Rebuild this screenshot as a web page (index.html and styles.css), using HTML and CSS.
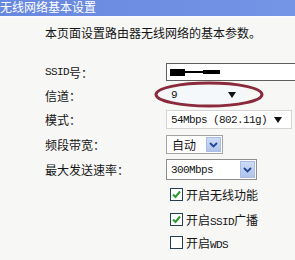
FILE: index.html
```html
<!DOCTYPE html>
<html lang="zh-CN">
<head>
<meta charset="utf-8">
<title>无线网络基本设置</title>
<link rel="stylesheet" href="styles.css">
</head>
<body>
<div class="header"><span>无线网络基本设置</span></div>
<p class="intro">本页面设置路由器无线网络的基本参数。</p>
<div class="form">
  <div class="label"><span class="en">SSID</span>号：</div>
  <div class="ctrl">
    <div class="text-input">
      <span class="r-block"></span><span class="r-line"></span><span class="r-bar"></span>
    </div>
  </div>

  <div class="label">信道：</div>
  <div class="ctrl">
    <div class="sel-ch"><span class="en">9</span><span class="tri"></span></div>
  </div>

  <div class="label">模式：</div>
  <div class="ctrl">
    <div class="sel-mode"><span class="en">54Mbps (802.11g)</span><span class="tri"></span></div>
  </div>

  <div class="label">频段带宽：</div>
  <div class="ctrl">
    <div class="sel-xp w-bw"><span>自动</span><span class="btn"><svg viewBox="0 0 9 6" width="9" height="6"><path d="M1 1 L4.5 4.5 L8 1" fill="none" stroke="#23469a" stroke-width="1.8"/></svg></span></div>
  </div>

  <div class="label">最大发送速率：</div>
  <div class="ctrl">
    <div class="sel-xp w-rate"><span class="en">300Mbps</span><span class="btn"><svg viewBox="0 0 9 6" width="9" height="6"><path d="M1 1 L4.5 4.5 L8 1" fill="none" stroke="#23469a" stroke-width="1.8"/></svg></span></div>
  </div>

  <div class="ctrl c2">
    <span class="cb"><svg viewBox="0 0 11 11" width="11" height="11"><path d="M2 5.5 L4.5 8 L9 2.5" fill="none" stroke="#2c9a2c" stroke-width="2"/></svg></span><span>开启无线功能</span>
  </div>
  <div class="ctrl c2">
    <span class="cb"><svg viewBox="0 0 11 11" width="11" height="11"><path d="M2 5.5 L4.5 8 L9 2.5" fill="none" stroke="#2c9a2c" stroke-width="2"/></svg></span><span>开启<span class="en">SSID</span>广播</span>
  </div>
  <div class="ctrl c2">
    <span class="cb"></span><span>开启<span class="en">WDS</span></span>
  </div>
</div>
<svg class="ellipse" width="112" height="29" viewBox="0 0 112 29"><ellipse cx="56" cy="14.5" rx="53" ry="11.5" fill="none" stroke="#8a2a3c" stroke-width="3"/></svg>
</body>
</html>
```

FILE: styles.css
```css
html, body {
  margin: 0;
  padding: 0;
}
body {
  width: 295px;
  height: 260px;
  overflow: hidden;
  position: relative;
  background: #f7f7f5;
  color: #151515;
  font-family: "Noto Sans CJK SC", sans-serif;
  font-size: 12px;
}
.en {
  font-family: "Liberation Mono", "DejaVu Sans Mono", monospace;
  font-size: 11px;
  letter-spacing: -0.6px;
}
.header {
  height: 16px;
  background: linear-gradient(to right, #6788df, #7494e6);
  color: #fff;
  overflow: hidden;
  border-bottom: 2px solid #fbfbfd;
}
.header span {
  display: block;
  font-size: 12px;
  line-height: 13px;
  margin-top: 0;
  white-space: nowrap;
}
.intro {
  margin: 7px 0 0 45px;
  line-height: 16px;
  white-space: nowrap;
}
.form {
  display: grid;
  grid-template-columns: 121px 1fr;
  grid-template-rows: 22px 24px 25px 25px 25px 25px 24px 23px;
  padding-left: 45px;
  margin-top: 20px;
}
.label {
  display: flex;
  align-items: center;
  white-space: nowrap;
}
.ctrl {
  display: flex;
  align-items: center;
  white-space: nowrap;
}
.c2 {
  grid-column: 2;
}
.text-input {
  width: 140px;
  height: 18px;
  box-sizing: border-box;
  border: 1px solid #5f5f5f;
  background: #fff;
  display: flex;
  align-items: center;
  padding-left: 3px;
}
.r-block {
  width: 15px;
  height: 7px;
  background: #000;
}
.r-line {
  width: 18px;
  height: 2px;
  background: #000;
}
.r-bar {
  width: 17px;
  height: 4px;
  background: #000;
}
.tri {
  width: 0;
  height: 0;
  border-left: 4px solid transparent;
  border-right: 4px solid transparent;
  border-top: 6px solid #111;
}
.sel-ch {
  width: 80px;
  height: 18px;
  box-sizing: border-box;
  margin-left: -3px;
  background: #f4f8fb;
  display: flex;
  align-items: center;
  justify-content: space-between;
  padding: 0 7px 0 8px;
}
.sel-mode {
  width: 126px;
  height: 19px;
  box-sizing: border-box;
  border: 1px solid #d4d4d4;
  background: #fff;
  display: flex;
  align-items: center;
  justify-content: space-between;
  padding: 0 9px 0 4px;
}
.sel-xp {
  height: 19px;
  box-sizing: border-box;
  border: 1px solid #a3a3a3;
  background: #fff;
  display: flex;
  align-items: center;
  justify-content: space-between;
  padding: 0 1px 0 5px;
}
.w-bw {
  width: 57px;
}
.w-rate {
  width: 91px;
  height: 21px;
  border-color: #8e8e8e;
  padding-left: 4px;
}
.btn {
  width: 15px;
  height: 15px;
  box-sizing: border-box;
  background: linear-gradient(#cddbf5, #b0c4ea);
  border: 1px solid #a9bde6;
  display: flex;
  align-items: center;
  justify-content: center;
}
.w-rate .btn {
  height: 17px;
}
.cb {
  width: 13px;
  height: 13px;
  box-sizing: border-box;
  border: 1px solid #243f55;
  background: #fff;
  margin: 0 3px 0 4px;
  display: flex;
  align-items: center;
  justify-content: center;
}
.ellipse {
  position: absolute;
  left: 153px;
  top: 80px;
}
```
